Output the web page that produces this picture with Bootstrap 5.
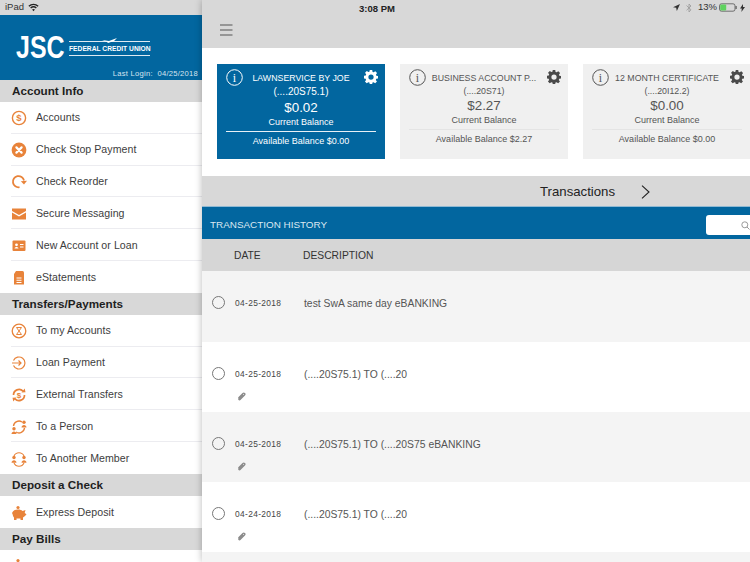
<!DOCTYPE html>
<html lang="en"><head><meta charset="utf-8"><title>JSC Federal Credit Union</title>
<link href="https://cdn.jsdelivr.net/npm/bootstrap@5.3.0/dist/css/bootstrap.min.css" rel="stylesheet">
<style>
html,body{width:750px;height:562px;overflow:hidden;margin:0;background:#fff;font-family:"Liberation Sans",Arial,sans-serif;color:#444}
.stat-bar{position:absolute;top:0;left:0;width:750px;height:15px;z-index:5;font-size:9.5px;color:#333;padding:0 5px 0 5px}
.stat-mid{position:absolute;left:359px;top:2px;font-weight:600;font-size:9.5px;color:#222}
.side{width:202px;height:562px;flex:none;overflow:hidden;background:#fff}
.side-top{height:15px;background:#d8d8d8}
.brand{height:65px;background:#02669f;color:#fff;position:relative;padding:21px 0 0 16px}
.jsc{font-size:32px;font-weight:700;line-height:22px;width:53px;flex:none;transform:scaleX(.78);transform-origin:left}
.fcu{width:81px;margin-top:5px;height:15px;border-top:1px solid #dfeaf2;border-bottom:1px solid #dfeaf2;font-size:6.7px;line-height:13px;font-weight:700;white-space:nowrap;position:relative}
.plane{position:absolute;left:33px;top:-4px}
.last{position:absolute;right:4px;bottom:1px;font-size:7.6px;letter-spacing:.25px;color:#d5e4ef;white-space:pre}
.sec{height:22px;line-height:22px;background:#d8d8d8;padding-left:12px;font-size:11.7px;font-weight:700;color:#1f1f1f}
.menu-row{height:31.8px;margin-left:11px;display:flex;align-items:center;gap:9px;background:#fff;border:0;border-bottom:1px solid #ececf0;border-radius:0;padding:2px 0 0 0;font-size:10.6px;color:#3d3d3d;letter-spacing:.05px}
.menu-row:last-child{border-bottom:0}
.menu-row svg{width:16px;height:16px;flex:none;color:#e8833a}
.main{flex:1;min-width:0;height:562px;overflow:hidden;position:relative;z-index:2;background:#fff;box-shadow:0 0 7px rgba(0,0,0,.28)}
.topbar{height:48px;background:#d8d8d8;padding:24px 0 0 18px}
.cards-zone{height:128px;padding:16px 0 0 15px;gap:15px;overflow:hidden}
.acct{width:168px;height:95px;flex:none;border:0;border-radius:0;background:#f0f0f0;color:#555;text-align:center;position:relative;padding:8px 9px 0}
.acct.on{background:#02669f;color:#fff}
.acct .nm{font-size:8.8px;line-height:13px;white-space:nowrap;padding:0 13px 0 13px}
.acct .num{font-size:8.8px;line-height:13px}
.acct.on .num{font-size:10px}
.acct .amt{font-size:13.4px;line-height:15px}
.acct.on .amt{margin-top:2px}
.acct .lbl{font-size:9px;line-height:13px;padding-top:1px}
.acct .avl{font-size:9px;line-height:13px;border-top:1px solid #e4e4e4;margin-top:2px;padding-top:3px}
.acct.on .avl{border-top-color:#e8f0f6}
.ico-l{position:absolute;left:9px;top:5px;width:17px;height:17px}
.ico-r{position:absolute;right:7px;top:6px;width:14px;height:14px}
.tx-bar{height:31px;background:#d8d8d8;border-bottom:1px solid #8fb9d3;color:#222;font-size:13.2px;padding:1px 0 0 338px;gap:26px}
.tx-head{height:32px;background:#02669f;color:#dbe8f1;font-size:9.9px;padding:4px 0 0 8px}
.srch{width:60px;height:20px;background:#fff;border-radius:3px;margin-right:-16px;flex:none;padding:0 0 0 35px}
.col-bar{height:32px;background:#d6d6d6;color:#333;font-size:10.3px;padding:2px 0 0 32px}
.col-bar .c1{width:69px}
.tx{height:70px;padding:25px 0 0 10px;background:#fff;position:relative}
.tx.first{height:71px}
.tx.alt{background:#f4f4f4}
.rdo{width:13px;height:13px;border:1.3px solid #777;border-radius:50%;flex:none}
.dt{width:69px;margin-left:10px;font-size:8.4px;letter-spacing:.35px;color:#444;line-height:15px}
.ds{font-size:10.35px;color:#555;line-height:15px}
.clip{position:absolute;left:35px;top:50px;width:9px;height:9px;color:#8b8b8b}
</style></head>
<body class="d-flex position-relative">
<div class="stat-bar d-flex justify-content-between align-items-center">
  <div class="d-flex align-items-center gap-1"><span>iPad</span>
    <svg width="11" height="9" viewBox="0 0 12 9"><path d="M6 8.6 4.4 6.8a2.4 2.4 0 0 1 3.2 0zM3.4 5.7 2.4 4.6a5.4 5.4 0 0 1 7.2 0l-1 1.1a4 4 0 0 0-5.2 0zM1.5 3.6.4 2.5a8.3 8.3 0 0 1 11.2 0l-1.1 1.1a6.8 6.8 0 0 0-9 0z" fill="#222"/></svg></div>
  <span class="stat-mid">3:08 PM</span>
  <div class="d-flex align-items-center" style="gap:2px">
    <svg class="me-1" width="7" height="7" viewBox="0 0 8 8"><path d="M8 0 0 3.6l3.6.8.8 3.6z" fill="#333"/></svg>
    <svg class="me-1" width="6" height="10" viewBox="0 0 6 10"><path d="M.5 2.500 5 6.800 3 9V1l2 2L.5 7.300" fill="none" stroke="#999" stroke-width=".8"/></svg>
    <span>13%</span>
    <svg width="19" height="9" viewBox="0 0 19 9"><rect x=".5" y=".8" width="15.500" height="7.400" rx="2" fill="none" stroke="#444" stroke-width=".7"/><rect x="1.200" y="1.500" width="6" height="6" rx="1" fill="#5fd35f"/><rect x="16.600" y="3" width="1" height="3" fill="#444"/></svg>
    <svg width="5" height="8" viewBox="0 0 5 8"><path d="M3 0 0 4.600h1.800L1.400 8 5 3H3z" fill="#333"/></svg>
  </div>
</div>

<aside class="side">
  <div class="side-top"></div>
  <div class="brand">
    <div class="d-flex align-items-start">
      <div class="jsc">JSC</div>
      <div class="fcu">FEDERAL CREDIT UNION
        <svg class="plane" width="16" height="6" viewBox="0 0 16 6"><path d="M0 2 7 3l8-3-3 3-6 2-1-1z" fill="#fff"/></svg>
      </div>
    </div>
    <div class="last">Last Login:  04/25/2018</div>
  </div>
  <div class="sec">Account Info</div>
  <div class="list-group list-group-flush">
    <div class="list-group-item menu-row"><svg viewBox="0 0 16 16"><circle cx="8" cy="8" r="6.600" fill="none" stroke="currentColor" stroke-width="1.400"/><text x="8" y="11.400" text-anchor="middle" font-size="9.500" font-weight="700" fill="currentColor" font-family="Liberation Sans">$</text></svg>Accounts</div>
    <div class="list-group-item menu-row"><svg viewBox="0 0 16 16"><circle cx="8" cy="8" r="7.400" fill="currentColor"/><path d="m5.400 5.400 5.200 5.200m0-5.200-5.200 5.200" stroke="#fff" stroke-width="2.200" stroke-linecap="round"/></svg>Check Stop Payment</div>
    <div class="list-group-item menu-row"><svg viewBox="0 0 16 16"><path d="M8.500 13.200A5.600 5.600 0 1 1 13 6.500" fill="none" stroke="currentColor" stroke-width="1.800"/><path d="m9.800 7.200 6.200-.4-3 3.800z" fill="currentColor"/></svg>Check Reorder</div>
    <div class="list-group-item menu-row"><svg viewBox="0 0 16 16"><path d="M1 2.500h14v2.400L8 9 1 4.900zM1 6.500l7 4 7-4v7H1z" fill="currentColor"/></svg>Secure Messaging</div>
    <div class="list-group-item menu-row"><svg viewBox="0 0 16 16"><rect x="1.500" y="2.500" width="13" height="10.500" rx="1" fill="currentColor"/><circle cx="5.500" cy="6.800" r="1.400" fill="#fff"/><path d="M3.500 10.500c.3-2 3.700-2 4 0zM9 6h3.500v1H9zm0 2.500h3.500v1H9z" fill="#fff"/></svg>New Account or Loan</div>
    <div class="list-group-item menu-row"><svg viewBox="0 0 16 16"><path d="M5 1h6.500A1.500 1.500 0 0 1 13 2.500v12h-10V4z" fill="currentColor"/><path d="M5.500 7.500h5v1h-5zm0 2.200h5v1h-5zm0 2.200h5v1h-5z" fill="#fff"/></svg>eStatements</div>
  </div>
  <div class="sec">Transfers/Payments</div>
  <div class="list-group list-group-flush">
    <div class="list-group-item menu-row"><svg viewBox="0 0 16 16"><circle cx="8" cy="8" r="6.800" fill="none" stroke="currentColor" stroke-width="1.300"/><path d="M5.500 4.500h5L8 8l2.500 3.500h-5L8 8z" fill="none" stroke="currentColor" stroke-width="1"/></svg>To my Accounts</div>
    <div class="list-group-item menu-row"><svg viewBox="0 0 16 16"><path d="M2.500 5.500a6 6 0 1 1 0 5M1 8h9M7.500 5.500 10 8l-2.500 2.500" fill="none" stroke="currentColor" stroke-width="1.200"/></svg>Loan Payment</div>
    <div class="list-group-item menu-row"><svg viewBox="0 0 16 16"><path d="M2.500 8A5.500 5.500 0 0 1 12 4.200M13.500 8A5.500 5.500 0 0 1 4 11.800" fill="none" stroke="currentColor" stroke-width="1.700"/><path d="m10.500 5.500 4-.2-.8-3.800zM5.500 10.500l-4 .2.800 3.800z" fill="currentColor"/><text x="8" y="11" text-anchor="middle" font-size="8" font-weight="700" fill="currentColor" font-family="Liberation Sans">$</text></svg>External Transfers</div>
    <div class="list-group-item menu-row"><svg viewBox="0 0 16 16"><path d="M2.500 7A5.500 5.500 0 0 1 11 3M13.500 9A5.500 5.500 0 0 1 5 13" fill="none" stroke="currentColor" stroke-width="1.400"/><circle cx="13" cy="3.300" r="1.700" fill="currentColor"/><path d="M10.500 8.500c0-3.400 5-3.400 5 0z" fill="currentColor"/><circle cx="3" cy="9.800" r="1.700" fill="currentColor"/><path d="M.5 15c0-3.400 5-3.400 5 0z" fill="currentColor"/></svg>To a Person</div>
    <div class="list-group-item menu-row"><svg viewBox="0 0 16 16"><path d="M3 5a5.500 5.500 0 0 1 10 0M3 12a5.500 5.500 0 0 0 10 0" fill="none" stroke="currentColor" stroke-width="1.100"/><circle cx="3" cy="6.500" r="1.700" fill="currentColor"/><path d="M.5 11.800c0-3.400 5-3.400 5 0z" fill="currentColor"/><circle cx="13" cy="6.500" r="1.700" fill="currentColor"/><path d="M10.500 11.800c0-3.400 5-3.400 5 0z" fill="currentColor"/></svg>To Another Member</div>
  </div>
  <div class="sec">Deposit a Check</div>
  <div class="list-group list-group-flush">
    <div class="list-group-item menu-row"><svg viewBox="0 0 16 16"><circle cx="7" cy="2.500" r="1.600" fill="currentColor"/><path d="M1 8c1-2.500 3-3.500 6-3.500 2 0 3.500.5 4.500 1.500l3-1-.8 3 1.800 1.200-1.500 1.800-2 1.500V15H9.500v-1.500h-4V15H3v-2.500C2 11.500 1.800 10 1.500 9z" fill="currentColor"/></svg>Express Deposit</div>
  </div>
  <div class="sec">Pay Bills</div>
  <div class="list-group list-group-flush">
    <div class="list-group-item menu-row"><svg viewBox="0 0 16 16"><circle cx="7" cy="2.500" r="1.600" fill="currentColor"/><path d="M1 8c1-2.500 3-3.500 6-3.500 2 0 3.500.5 4.500 1.500l3-1-.8 3 1.800 1.200-1.500 1.800-2 1.500V15H9.500v-1.500h-4V15H3v-2.500C2 11.500 1.800 10 1.500 9z" fill="currentColor"/></svg>Bills</div>
  </div>
</aside>

<main class="main">
  <div class="topbar">
    <svg class="d-block" width="13" height="12" viewBox="0 0 13 12"><path d="M0 1h12.500M0 6h12.500M0 11h12.500" stroke="#555" stroke-width="1"/></svg>
  </div>
  <div class="cards-zone d-flex">
    <div class="card acct on">
      <svg class="ico-l" viewBox="0 0 17 17"><circle cx="8.500" cy="8.500" r="7.800" fill="none" stroke="#fff" stroke-width="1"/><text x="8.500" y="13" text-anchor="middle" font-size="12" fill="#fff" font-family="Liberation Serif">i</text></svg>
      <svg class="ico-r" viewBox="0 0 16 16"><use href="#gear" fill="#fff"/></svg>
      <div class="nm">LAWNSERVICE BY JOE</div>
      <div class="num">(....20S75.1)</div>
      <div class="amt">$0.02</div>
      <div class="lbl">Current Balance</div>
      <div class="avl">Available Balance $0.00</div>
    </div>
    <div class="card acct">
      <svg class="ico-l" viewBox="0 0 17 17"><circle cx="8.500" cy="8.500" r="7.800" fill="none" stroke="#555" stroke-width="1"/><text x="8.500" y="13" text-anchor="middle" font-size="12" fill="#555" font-family="Liberation Serif">i</text></svg>
      <svg class="ico-r" viewBox="0 0 16 16"><use href="#gear" fill="#4a4a4a"/></svg>
      <div class="nm">BUSINESS ACCOUNT P...</div>
      <div class="num">(....20S71)</div>
      <div class="amt">$2.27</div>
      <div class="lbl">Current Balance</div>
      <div class="avl">Available Balance $2.27</div>
    </div>
    <div class="card acct">
      <svg class="ico-l" viewBox="0 0 17 17"><circle cx="8.500" cy="8.500" r="7.800" fill="none" stroke="#555" stroke-width="1"/><text x="8.500" y="13" text-anchor="middle" font-size="12" fill="#555" font-family="Liberation Serif">i</text></svg>
      <svg class="ico-r" viewBox="0 0 16 16"><use href="#gear" fill="#4a4a4a"/></svg>
      <div class="nm">12 MONTH CERTIFICATE</div>
      <div class="num">(....20I12.2)</div>
      <div class="amt">$0.00</div>
      <div class="lbl">Current Balance</div>
      <div class="avl">Available Balance $0.00</div>
    </div>
  </div>
  <div class="tx-bar d-flex align-items-center"><span>Transactions</span>
    <svg width="9" height="14" viewBox="0 0 9 14"><path d="m1 .7 7 6.300-7 6.300" fill="none" stroke="#222" stroke-width="1.100"/></svg></div>
  <div class="tx-head d-flex align-items-center justify-content-between"><span>TRANSACTION HISTORY</span>
    <div class="srch d-flex align-items-center"><svg width="9" height="9" viewBox="0 0 9 9"><circle cx="3.800" cy="3.800" r="3" fill="none" stroke="#999"/><path d="m6 6 2.500 2.500" stroke="#999"/></svg></div></div>
  <div class="col-bar d-flex align-items-center"><span class="c1">DATE</span><span>DESCRIPTION</span></div>
  <div class="tx first alt d-flex"><span class="rdo"></span><span class="dt">04-25-2018</span><span class="ds">test SwA same day eBANKING</span></div>
  <div class="tx d-flex"><span class="rdo"></span><span class="dt">04-25-2018</span><span class="ds">(....20S75.1) TO (....20</span>
    <svg class="clip" viewBox="0 0 9 9"><use href="#clipi"/></svg></div>
  <div class="tx alt d-flex"><span class="rdo"></span><span class="dt">04-25-2018</span><span class="ds">(....20S75.1) TO (....20S75 eBANKING</span>
    <svg class="clip" viewBox="0 0 9 9"><use href="#clipi"/></svg></div>
  <div class="tx d-flex"><span class="rdo"></span><span class="dt">04-24-2018</span><span class="ds">(....20S75.1) TO (....20</span>
    <svg class="clip" viewBox="0 0 9 9"><use href="#clipi"/></svg></div>
  <div class="tx alt"></div>
</main>

<svg width="0" height="0" class="position-absolute"><defs>
  <g id="gear"><path fill-rule="evenodd" d="M6.600 0h2.800l.4 2.200 1.200.5 1.900-1.300 2 2-1.300 1.900.5 1.200 1.900.4v2.800l-2 .4-.5 1.200 1.300 1.900-2 2-1.900-1.300-1.200.5-.4 2H6.600l-.4-2-1.200-.5-1.900 1.300-2-2 1.300-1.900-.5-1.200-1.900-.4V6.600l2-.4.500-1.200L1.200 3.100l2-2L5 2.400l1.200-.5zM8 5a3 3 0 1 0 0 6 3 3 0 0 0 0-6z"/></g>
  <g id="clipi"><path d="M1.500 6 6 1.500c1-1 2.500.5 1.500 1.500L3 7.500c-.6.600-1.600-.4-1-1L6 2.500" fill="none" stroke="currentColor" stroke-width="1.400"/></g>
</defs></svg>
</body></html>
